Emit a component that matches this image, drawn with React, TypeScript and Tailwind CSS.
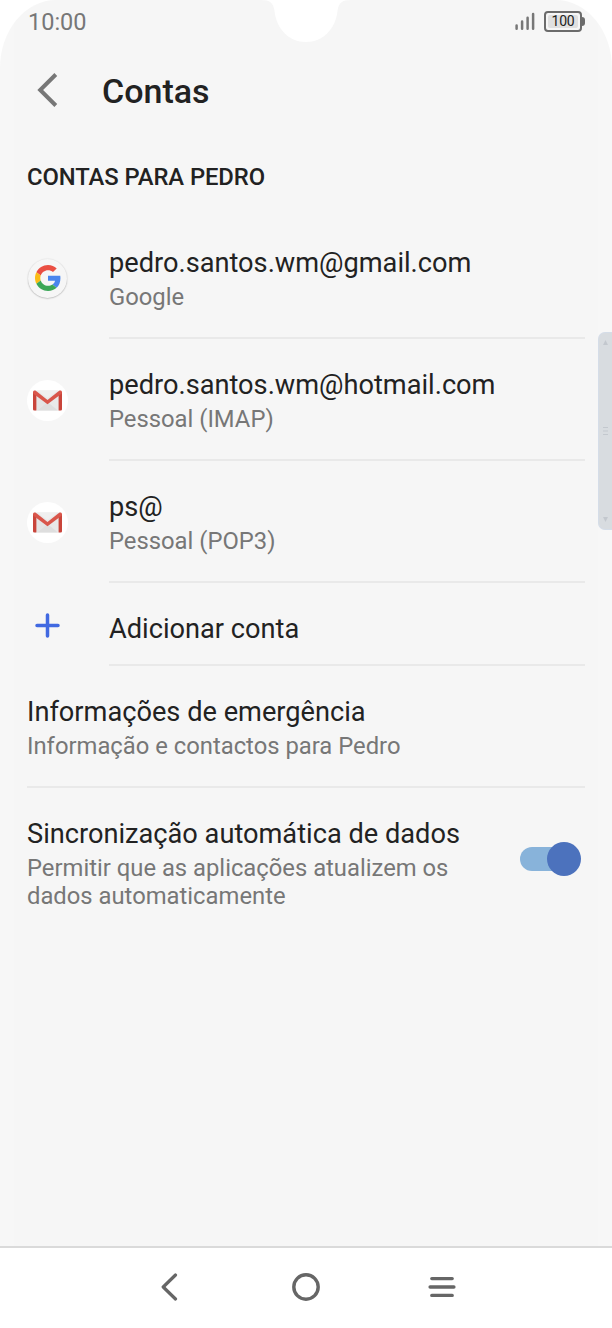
import type { ReactNode } from "react"

interface Account {
  address: string
  kind: string
  icon: ReactNode
}

function GoogleIcon() {
  return (
    <div className="flex size-[39px] items-center justify-center rounded-full bg-[#f6f6f6] shadow-[0_0.5px_1.5px_rgba(0,0,0,0.32)]">
      <svg viewBox="0 0 48 48" className="size-[26px]">
        <path fill="#ea4f43" d="M24 9.5c3.54 0 6.71 1.22 9.21 3.6l6.85-6.85C35.9 2.38 30.47 0 24 0 14.62 0 6.51 5.38 2.56 13.22l7.98 6.19C12.43 13.72 17.74 9.5 24 9.5z" />
        <path fill="#4a86ee" d="M46.98 24.55c0-1.57-.15-3.09-.38-4.55H24v9.02h12.94c-.58 2.96-2.26 5.48-4.78 7.18l7.73 6c4.51-4.18 7.09-10.36 7.09-17.65z" />
        <path fill="#fbbc15" d="M10.53 28.59c-.48-1.45-.76-2.99-.76-4.59s.27-3.14.76-4.59l-7.98-6.19C.92 16.46 0 20.12 0 24c0 3.88.92 7.54 2.56 10.78l7.97-6.19z" />
        <path fill="#3ba757" d="M24 48c6.48 0 11.93-2.13 15.89-5.81l-7.73-6c-2.15 1.45-4.92 2.3-8.16 2.3-6.26 0-11.57-4.22-13.47-9.91l-7.98 6.19C6.51 42.62 14.62 48 24 48z" />
      </svg>
    </div>
  )
}

function MailIcon() {
  return (
    <div className="flex size-[41px] items-center justify-center rounded-full bg-white">
      <svg viewBox="0 0 29 21" className="h-[21px] w-[29px]">
        <path fill="#e9e9e9" d="M2 0.5h25v20H2z" />
        <path fill="#dedede" d="M4 20.5L14.5 12 25 20.5z" />
        <path fill="#e4e4e4" d="M4 4v16.5L14.5 12z" />
        <path fill="#f0f0f0" d="M4 0.5h21L14.5 8z" />
        <path fill="#c9453b" d="M0 2h3.4v18.5H1.2A1.2 1.2 0 0 1 0 19.3zM25.6 2H29v17.3a1.2 1.2 0 0 1-1.2 1.2h-2.2z" />
        <path fill="#d9564b" d="M0 2.2C0 .5 1.6 0 2.8.8L14.5 10 26.2.8C27.4 0 29 .5 29 2.2c0 .9-.4 1.5-1.1 2L14.5 14.2 1.1 4.2C.4 3.7 0 3.1 0 2.2z" />
      </svg>
    </div>
  )
}

const accounts: Account[] = [
  { address: "pedro.santos.wm@gmail.com", kind: "Google", icon: <GoogleIcon /> },
  { address: "pedro.santos.wm@hotmail.com", kind: "Pessoal (IMAP)", icon: <MailIcon /> },
  { address: "ps@", kind: "Pessoal (POP3)", icon: <MailIcon /> },
]

function StatusBar() {
  return (
    <header className="flex h-[44px] items-center justify-between pr-[27px] pl-[28px] text-[#777]">
      <span className="text-[23.5px] leading-[44px]">10:00</span>
      <div className="flex items-center gap-[9px] pb-[2px]">
        <svg viewBox="0 0 20 18" className="h-[18px] w-[20px]" stroke="#777" strokeWidth="2.5" strokeLinecap="round">
          <path d="M1.6 13.5v3.2M7.1 9.5v7.2M12.6 5.8v10.9M18.1 2.1v14.6" />
        </svg>
        <div className="flex items-center">
          <div className="flex h-[21px] w-[38px] rounded-[4px] border-2 border-[#6b6b6b] p-[2px]">
            <span className="flex flex-1 items-center justify-center rounded-[2px] bg-[#e0e0e0] text-[14px] leading-none tracking-[-0.2px] text-[#222]">100</span>
          </div>
          <span className="h-[9px] w-[3px] rounded-r-sm bg-[#6b6b6b]" />
        </div>
      </div>
    </header>
  )
}

function RowText({ title, detail }: { title: string; detail: string }) {
  return (
    <div>
      <p className="text-[27.2px] leading-[36px] text-[#222]">{title}</p>
      <p className="mt-[2px] text-[23.8px] leading-[28px] text-[#777]">{detail}</p>
    </div>
  )
}

function Scrollbar() {
  return (
    <div className="absolute top-[332px] right-0 flex h-[198px] w-[14px] flex-col items-center justify-between rounded-l-[7px] border border-r-0 border-[#d5dde8] bg-[#d8dce0] py-[7px]">
      <svg viewBox="0 0 5 5" className="size-[5px]">
        <path fill="#c3c8ce" d="M2.5 0L5 5H0z" />
      </svg>
      <svg viewBox="0 0 5 8" className="h-[8px] w-[5px]" stroke="#c3c8ce">
        <path d="M0 .5h5M0 4h5M0 7.5h5" />
      </svg>
      <svg viewBox="0 0 5 5" className="size-[5px]">
        <path fill="#c3c8ce" d="M0 0h5L2.5 5z" />
      </svg>
    </div>
  )
}

function NavBar() {
  return (
    <nav className="flex h-[82px] items-start justify-between border-t-2 border-[#dadada] bg-white px-[156px] pt-[25px]">
      <svg viewBox="0 0 28 28" className="size-[28px]" fill="none" stroke="#666" strokeWidth="3.2" strokeLinecap="round" strokeLinejoin="round">
        <path d="M19.5 2L7.2 14l12.3 12" />
      </svg>
      <svg viewBox="0 0 28 28" className="size-[28px]" fill="none" stroke="#666" strokeWidth="3.4">
        <circle cx="14" cy="14" r="12.2" />
      </svg>
      <svg viewBox="0 0 28 28" className="size-[28px]" fill="none" stroke="#666" strokeWidth="3.4" strokeLinecap="round">
        <path d="M3.8 5.6h20.4M2.1 14h23.8M3.8 22.4h20.4" />
      </svg>
    </nav>
  )
}

export default function App() {
  return (
    <div className="relative flex h-[1328px] w-[612px] flex-col overflow-hidden bg-white font-['Roboto',sans-serif]">
      <div className="flex flex-1 flex-col rounded-t-[56px_68px] bg-[linear-gradient(90deg,#f7f7f7_14px,#f6f6f6_14px,#f6f6f6_598px,#f7f7f7_598px)]">
        <StatusBar />
        <div className="flex h-[93px] items-center pl-[36px]">
          <svg viewBox="0 0 22 34" className="mb-[2px] h-[34px] w-[22px]" fill="none" stroke="#777" strokeWidth="4">
            <path d="M19.8 1.5L4.2 17l15.6 15.5" />
          </svg>
          <h1 className="ml-[44px] text-[34px] leading-[40px] font-medium text-[#222]">Contas</h1>
        </div>
        <h2 className="h-[80px] pt-[26px] pl-[27px] text-[23.8px] leading-[28px] font-medium tracking-[-0.08px] text-[#222]">CONTAS PARA PEDRO</h2>

        <ul>
          {accounts.map((account) => (
            <li key={account.address} className="flex h-[122px] pr-[27px]">
              <div className="flex w-[109px] items-center pl-[27px]">
                <div className="flex w-[41px] justify-center">{account.icon}</div>
              </div>
              <div className="flex-1 border-b-2 border-[#e9e9e9] pt-[28px]">
                <RowText title={account.address} detail={account.kind} />
              </div>
            </li>
          ))}
          <li className="flex h-[83px] pr-[27px]">
            <div className="w-[109px] pt-[30px] pl-[35px]">
              <svg viewBox="0 0 25 25" className="size-[25px]" stroke="#4169e1" strokeWidth="3.5" strokeLinecap="round">
                <path d="M12.5 2v21M2 12.500h21" />
              </svg>
            </div>
            <p className="flex-1 border-b-2 border-[#e9e9e9] pt-[28px] text-[27.2px] leading-[36px] text-[#222]">Adicionar conta</p>
          </li>
        </ul>

        <section className="mr-[27px] ml-[27px] h-[122px] border-b-2 border-[#e9e9e9] pt-[28px]">
          <RowText title="Informações de emergência" detail="Informação e contactos para Pedro" />
        </section>
        <section className="mr-[31px] ml-[27px] flex items-start justify-between pt-[28px]">
          <div className="w-[450px]">
            <RowText title="Sincronização automática de dados" detail="Permitir que as aplicações atualizem os dados automaticamente" />
          </div>
          <button type="button" role="switch" aria-checked="true" aria-label="Sincronização automática de dados" className="mt-[25px] flex h-[36px] w-[61px] items-center">
            <span className="h-[24px] w-[42px] rounded-l-full bg-[#88b3da]" />
            <span className="-ml-[15px] size-[34px] shrink-0 rounded-full bg-[#4c72bd]" />
          </button>
        </section>
      </div>

      {/* camera notch */}
      <svg viewBox="0 0 90 43" className="absolute top-0 left-[261px] h-[43px] w-[90px]">
        <path fill="#fff" d="M0 0C9 0 12.5 3 13.5 11C15.5 29 28 42 45 42S74.5 29 76.5 11C77.5 3 81 0 90 0z" />
      </svg>
      <Scrollbar />
      <NavBar />
    </div>
  )
}
